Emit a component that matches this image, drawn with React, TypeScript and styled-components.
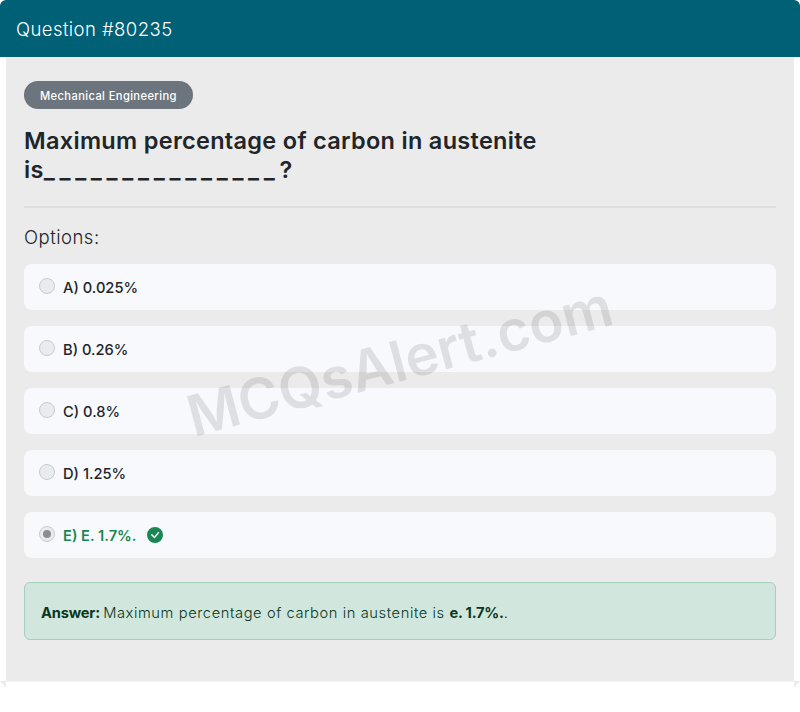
import { JSX } from "react";
import styled, { createGlobalStyle } from "styled-components";

const GlobalStyle = createGlobalStyle`
  html, body {
    margin: 0;
    background: #fff;
  }
  body {
    font-family: "Inter", "Noto Sans", sans-serif;
    color: #212529;
  }
  * {
    box-sizing: border-box;
  }
`;

const Card = styled.div`
  position: relative;
  width: 800px;
  height: 688px;
  border-radius: 6px;
  overflow: hidden;
  background: #fff;

  &::before,
  &::after {
    content: "";
    position: absolute;
    bottom: 0;
    width: 6px;
    height: 7px;
    background: #ececec;
  }

  &::before {
    left: 0;
    clip-path: polygon(0 0, 100% 0, 100% 100%);
  }

  &::after {
    right: 0;
    clip-path: polygon(0 0, 100% 0, 0 100%);
  }
`;

const Header = styled.div`
  height: 57px;
  padding: 0 16px;
  display: flex;
  align-items: center;
  background: #006076;
  color: #fff;
  font-size: 18.5px;
  font-weight: 300;
  letter-spacing: 0.43px;
`;

const Body = styled.div`
  height: 624px;
  margin: 0 6px;
  padding: 24px 18px 0;
  background: #ebebeb;
  box-shadow: 0 1px 0 #f4f4f4;
`;

const Badge = styled.span`
  display: inline-flex;
  align-items: center;
  height: 28px;
  padding: 1px 16px 0;
  border-radius: 14px;
  background: #6c757d;
  color: #fff;
  font-size: 11.2px;
  font-weight: 500;
  letter-spacing: 0.37px;
`;

const Title = styled.h1`
  margin: 17px 0 0;
  font-size: 23.5px;
  line-height: 29px;
  font-weight: 600;
  letter-spacing: 0.3px;
  color: #212529;
`;

const Blank = styled.span`
  letter-spacing: 4.7px;
`;

const Divider = styled.hr`
  height: 2px;
  margin: 22px 0 0;
  border: 0;
  background: #dfdfdf;
`;

const OptionsLabel = styled.div`
  margin-top: 17px;
  font-size: 18.5px;
  font-weight: 300;
  line-height: 24px;
  letter-spacing: 0.5px;
`;

const OptionList = styled.div`
  display: flex;
  flex-direction: column;
  gap: 16px;
  margin-top: 15px;
`;

const Option = styled.div`
  display: flex;
  align-items: center;
  gap: 8px;
  height: 46px;
  padding: 0 15px;
  border-radius: 8px;
  background: #f8f9fd;
`;

const Radio = styled.span<{ checked?: boolean }>`
  display: flex;
  align-items: center;
  justify-content: center;
  flex: none;
  width: 16px;
  height: 16px;
  margin-top: -3px;
  border: 1px solid #c9cbce;
  border-radius: 50%;
  background: #e9ecef;

  &::after {
    content: "";
    display: ${(props) => (props.checked ? "block" : "none")};
    width: 8px;
    height: 8px;
    border-radius: 50%;
    background: #8b8d90;
  }
`;

const OptionText = styled.span<{ correct?: boolean }>`
  padding-top: 2px;
  font-size: 14.7px;
  font-weight: ${(props) => (props.correct ? 600 : 500)};
  color: ${(props) => (props.correct ? "#198754" : "#212529")};
`;

const CheckIcon = styled.svg`
  flex: none;
  width: 16px;
  height: 16px;
  margin-left: 2px;
  color: #198754;
`;

const Answer = styled.div`
  display: flex;
  align-items: center;
  height: 58px;
  margin-top: 24px;
  padding: 3px 16px 0;
  border: 1px solid #a3cfbb;
  border-radius: 6px;
  background: #d1e7dd;
  color: #0a3622;
  font-size: 14.7px;
  font-weight: 300;
  letter-spacing: 0.58px;
  white-space: pre;

  b {
    font-weight: 700;
    letter-spacing: -0.2px;
  }
`;

const Watermark = styled.div`
  position: absolute;
  left: 181px;
  top: 325px;
  transform: rotate(-15deg);
  font-size: 56.5px;
  line-height: 72px;
  font-weight: 600;
  color: rgba(0, 0, 0, 0.1);
  white-space: nowrap;
  pointer-events: none;
`;

const options = ["A) 0.025%", "B) 0.26%", "C) 0.8%", "D) 1.25%"];

export default function App(): JSX.Element {
  return (
    <>
      <GlobalStyle />
      <Card>
        <Header>Question #80235</Header>
        <Body>
          <Badge>Mechanical Engineering</Badge>
          <Title>
            Maximum percentage of carbon in austenite
            <br />
            is<Blank>_______________</Blank>?
          </Title>
          <Divider />
          <OptionsLabel>Options:</OptionsLabel>
          <OptionList>
            {options.map((text) => (
              <Option key={text}>
                <Radio />
                <OptionText>{text}</OptionText>
              </Option>
            ))}
            <Option>
              <Radio checked />
              <OptionText correct>E) E. 1.7%.</OptionText>
              <CheckIcon viewBox="0 0 16 16" fill="currentColor">
                <path d="M16 8A8 8 0 1 1 0 8a8 8 0 0 1 16 0zm-3.97-3.03a.75.75 0 0 0-1.08.022L7.477 9.417 5.384 7.323a.75.75 0 0 0-1.06 1.06L6.97 11.03a.75.75 0 0 0 1.079-.02l3.992-4.99a.75.75 0 0 0-.01-1.05z" />
              </CheckIcon>
            </Option>
          </OptionList>
          <Answer>
            <b>Answer: </b>Maximum percentage of carbon in austenite is <b>e. 1.7%.</b>.
          </Answer>
        </Body>
        <Watermark>MCQsAlert.com</Watermark>
      </Card>
    </>
  );
}
